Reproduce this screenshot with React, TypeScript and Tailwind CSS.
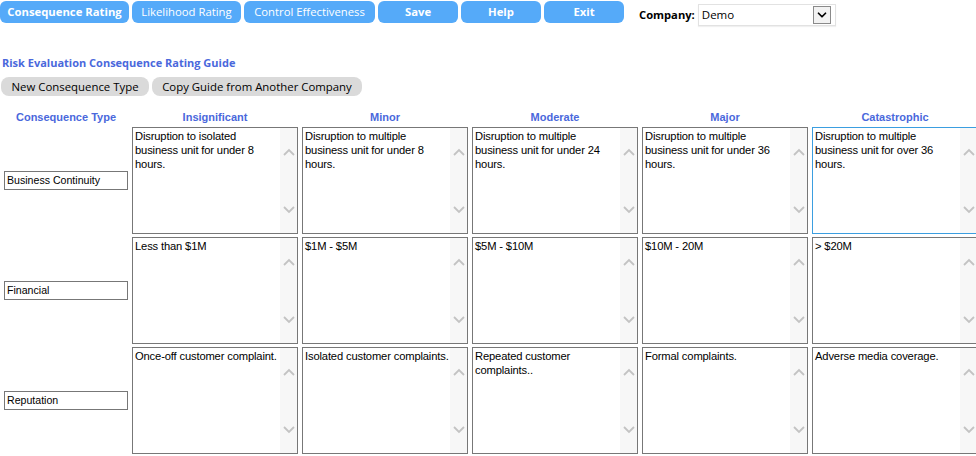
import { ChevronDown } from 'lucide-react';

const levels = ['Insignificant', 'Minor', 'Moderate', 'Major', 'Catastrophic'];

const rows = [
  {
    type: 'Business Continuity',
    cells: [
      'Disruption to isolated\nbusiness unit for under 8\nhours.',
      'Disruption to multiple\nbusiness unit for under 8\nhours.',
      'Disruption to multiple\nbusiness unit for under 24\nhours.',
      'Disruption to multiple\nbusiness unit for under 36\nhours.',
      'Disruption to multiple\nbusiness unit for over 36\nhours.',
    ],
  },
  {
    type: 'Financial',
    cells: ['Less than $1M', '$1M - $5M', '$5M - $10M', '$10M - 20M', '> $20M'],
  },
  {
    type: 'Reputation',
    cells: [
      'Once-off customer complaint.',
      'Isolated customer complaints.',
      'Repeated customer\ncomplaints..',
      'Formal complaints.',
      'Adverse media coverage.',
    ],
  },
];

const navButtons = [
  { label: 'Consequence Rating', w: 'w-[129px]', bold: true },
  { label: 'Likelihood Rating', w: 'w-[109px]', bold: false },
  { label: 'Control Effectiveness', w: 'w-[131px]', bold: false },
  { label: 'Save', w: 'w-[80px]', bold: true },
  { label: 'Help', w: 'w-[80px]', bold: true },
  { label: 'Exit', w: 'w-[80px]', bold: true },
];

function Chevron({ up }: { up?: boolean }) {
  return (
    <svg width="12" height="8" viewBox="0 0 12 8">
      <polyline
        points={up ? '1,7 6,2 11,7' : '1,1 6,6 11,1'}
        fill="none"
        stroke="#c3c3c3"
        strokeWidth="1.8"
      />
    </svg>
  );
}

// Mimics an old-style textarea with a disabled vertical scrollbar
function TextBox({ text, focused }: { text: string; focused?: boolean }) {
  return (
    <div
      className={`flex h-[107px] w-[166px] border ${
        focused ? 'border-[#3b9ee0]' : 'border-[#777777]'
      } bg-white`}
    >
      <div className="min-w-0 flex-1 whitespace-pre-line pl-[2px] pt-[1px] text-[11.2px] leading-[14px] tracking-[-0.15px] text-black font-['Liberation_Sans',Arial,sans-serif]">
        {text}
      </div>
      <div className="flex w-[17px] shrink-0 flex-col items-center justify-between bg-[#f7f7f7] pt-[20px] pb-[19px]">
        <Chevron up />
        <Chevron />
      </div>
    </div>
  );
}

export default function App() {
  return (
    <div className="h-[456px] w-[976px] overflow-hidden bg-white font-['Open_Sans',Tahoma,sans-serif]">
      {/* Top navigation */}
      <div className="flex items-start pt-[1px]">
        <div className="flex gap-[3px]">
          {navButtons.map((b) => (
            <button
              key={b.label}
              type="button"
              className={`${b.w} h-[22px] rounded-[6px] bg-[#55aaf9] text-[11.3px] leading-[22px] text-white ${
                b.bold ? 'font-bold' : 'font-normal'
              }`}
            >
              {b.label}
            </button>
          ))}
        </div>
        <div className="ml-[15px] flex items-center pt-[3px]">
          <span className="text-[11.2px] font-bold text-black">Company:</span>
          <div className="ml-[3px] flex h-[22px] w-[138px] items-center justify-between border border-[#e2e2e2] bg-white pl-[3px] pr-[4px] shadow-[0_1px_1px_rgba(0,0,0,0.06)]">
            <span className="text-[11.5px] text-black">Demo</span>
            <div className="flex h-[18px] w-[18px] items-center justify-center border border-[#8a8a8a] bg-[#f2f2f2]">
              <ChevronDown className="h-[14px] w-[14px] text-black" strokeWidth={3} />
            </div>
          </div>
        </div>
      </div>

      {/* Title */}
      <div className="mt-[29px] pl-[2px] text-[11px] font-bold leading-[16px] text-[#4a68dc]">
        Risk Evaluation Consequence Rating Guide
      </div>

      {/* Action buttons */}
      <div className="mt-[6px] flex gap-[3px] pl-[1px]">
        <button
          type="button"
          className="h-[19px] w-[148px] rounded-[8px] bg-[#dadada] text-[11.4px] leading-[19px] text-black"
        >
          New Consequence Type
        </button>
        <button
          type="button"
          className="h-[19px] w-[210px] rounded-[8px] bg-[#dadada] text-[11.4px] leading-[19px] text-black"
        >
          Copy Guide from Another Company
        </button>
      </div>

      {/* Rating grid */}
      <div className="mt-[11px] grid grid-cols-[132px_repeat(5,170px)] font-['Liberation_Sans',Arial,sans-serif]">
        <div className="h-[20px] text-center text-[11px] font-bold leading-[20px] text-[#4a68dc]">
          Consequence Type
        </div>
        {levels.map((l) => (
          <div
            key={l}
            className="h-[20px] w-[166px] text-center text-[11px] font-bold leading-[20px] text-[#4a68dc]"
          >
            {l}
          </div>
        ))}
        {rows.map((r) => (
          <div key={r.type} className="contents">
            <div className="flex h-[110px] items-center pb-[3px] pl-[4px]">
              <div className="h-[19px] w-[124px] border border-[#777777] bg-white px-[2px] text-[10.6px] leading-[17px] text-black">
                {r.type}
              </div>
            </div>
            {r.cells.map((c, i) => (
              <div key={i} className="h-[110px]">
                <TextBox text={c} focused={r.type === 'Business Continuity' && i === 4} />
              </div>
            ))}
          </div>
        ))}
      </div>
    </div>
  );
}
